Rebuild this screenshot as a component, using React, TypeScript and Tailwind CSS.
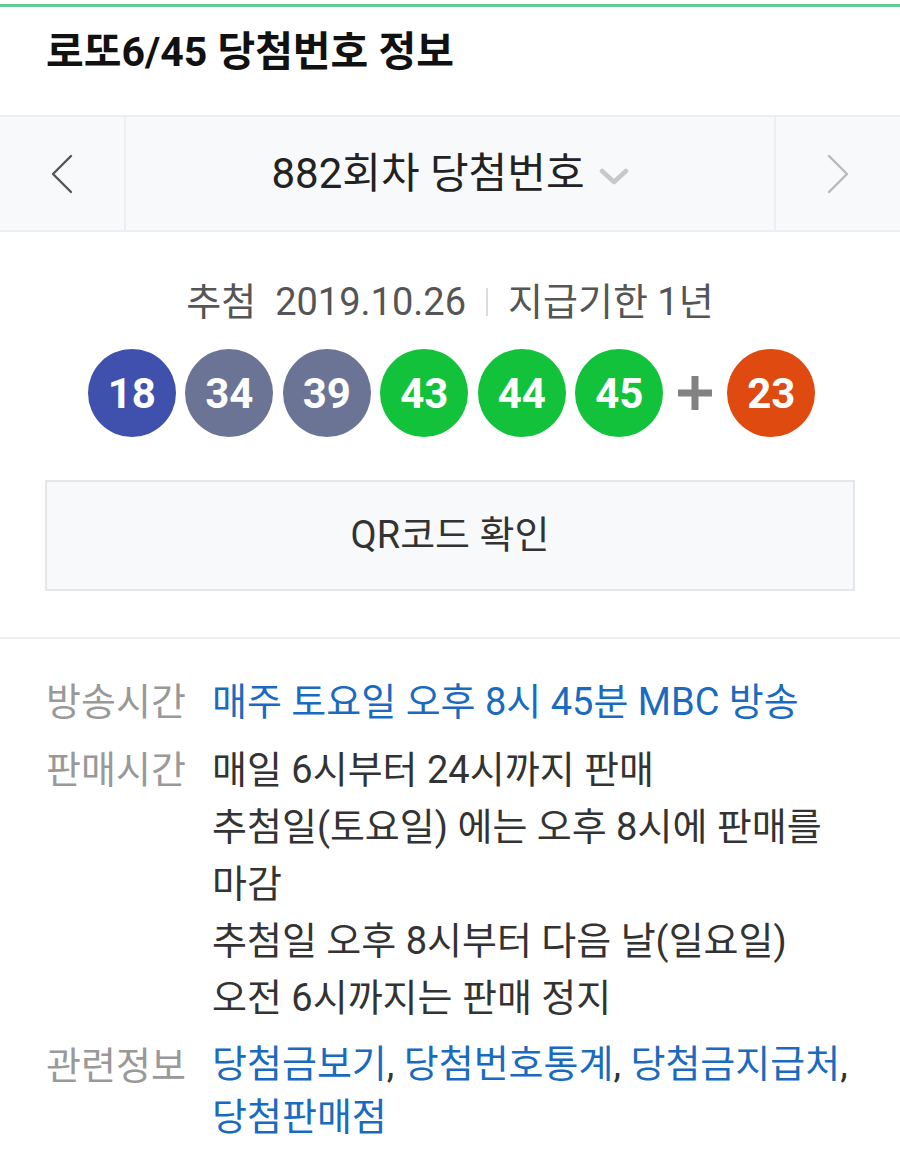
import React from "react";

const font = { fontFamily: 'Roboto, "Noto Sans CJK KR", sans-serif' };

type Ball = { n: number; color: string };

const balls: Ball[] = [
  { n: 18, color: "bg-[#3f51ad]" },
  { n: 34, color: "bg-[#6c7496]" },
  { n: 39, color: "bg-[#6c7496]" },
  { n: 43, color: "bg-[#13c23b]" },
  { n: 44, color: "bg-[#13c23b]" },
  { n: 45, color: "bg-[#13c23b]" },
];

function NumberBall({ n, color }: Ball) {
  return (
    <div
      className={`w-[88px] h-[88px] rounded-full ${color} flex items-center justify-center text-white text-[42px] font-bold`}
    >
      {n}
    </div>
  );
}

export default function App() {
  return (
    <div className="w-[900px] min-h-[1166px] bg-white" style={font}>
      {/* top accent */}
      <div className="pt-[4px]">
        <div className="h-[3px] bg-[#61ca98]" />
      </div>

      {/* title */}
      <div className="h-[108px] pt-[20px] px-[46px]">
        <h1 className="text-[41px] leading-[50px] font-bold text-[#111]">
          로또6/45 당첨번호 정보
        </h1>
      </div>

      {/* round selector */}
      <div className="h-[117px] flex bg-[#f8f9fb] border-t-2 border-b-2 border-[#eceef1]">
        <button className="w-[126px] flex items-center justify-center border-r-2 border-[#eceef1]">
          <svg width="24" height="40" viewBox="0 0 24 40" fill="none">
            <path d="M21 2 L3 20 L21 38" stroke="#555" strokeWidth="2.4" strokeLinecap="round" strokeLinejoin="round" />
          </svg>
        </button>
        <div className="flex-1 flex items-center justify-center gap-[14px]">
          <span className="text-[42px] text-[#222]">882회차 당첨번호</span>
          <svg width="30" height="18" viewBox="0 0 30 18" fill="none" className="mt-[6px]">
            <path d="M3 3 L15 14 L27 3" stroke="#c8c8c8" strokeWidth="4.5" strokeLinecap="round" strokeLinejoin="round" />
          </svg>
        </div>
        <button className="w-[126px] flex items-center justify-center border-l-2 border-[#eceef1]">
          <svg width="24" height="40" viewBox="0 0 24 40" fill="none">
            <path d="M3 2 L21 20 L3 38" stroke="#b9b9b9" strokeWidth="2.4" strokeLinecap="round" strokeLinejoin="round" />
          </svg>
        </button>
      </div>

      {/* winning numbers */}
      <div className="pt-[48px] px-[45px] pb-[46px] border-b-2 border-[#eef0f2]">
        <div className="flex items-center justify-center text-[38px] leading-[44px] text-[#555]">
          <span>추첨&nbsp;&nbsp;2019.10.26</span>
          <span className="w-[2px] h-[28px] bg-[#dcdcdc] mx-[20px]" />
          <span>지급기한 1년</span>
        </div>

        <div className="mt-[25px] flex items-center justify-center gap-[9.5px] pl-[3px]">
          {balls.map((b) => (
            <NumberBall key={b.n} {...b} />
          ))}
          <div className="w-[45px] flex items-center justify-center">
            <svg width="34" height="34" viewBox="0 0 34 34">
              <rect x="0" y="13.5" width="34" height="7" fill="#828282" />
              <rect x="13.5" y="0" width="7" height="34" fill="#828282" />
            </svg>
          </div>
          <NumberBall n={23} color="bg-[#df4a10]" />
        </div>

        <button className="mt-[43px] w-full h-[111px] border-2 border-[#e4e6e9] bg-[#f8f9fb] flex items-center justify-center text-[38px] text-[#333]">
          QR코드 확인
        </button>
      </div>

      {/* info */}
      <div className="pt-[35px] px-[46px] text-[38px] leading-[57px] flex flex-col gap-[11px]">
        <div className="flex">
          <div className="w-[166px] shrink-0 text-[#999]">방송시간</div>
          <div className="text-[#1a6bbf] whitespace-nowrap">매주 토요일 오후 8시 45분 MBC 방송</div>
        </div>
        <div className="flex">
          <div className="w-[166px] shrink-0 text-[#999]">판매시간</div>
          <div className="text-[#333] whitespace-nowrap">
            매일 6시부터 24시까지 판매
            <br />
            추첨일(토요일) 에는 오후 8시에 판매를
            <br />
            마감
            <br />
            추첨일 오후 8시부터 다음 날(일요일)
            <br />
            오전 6시까지는 판매 정지
          </div>
        </div>
        <div className="flex">
          <div className="w-[166px] shrink-0 text-[#999]">관련정보</div>
          <div className="text-[#333] leading-[53px] whitespace-nowrap">
            <a className="text-[#1a6bbf]">당첨금보기</a>,{" "}
            <a className="text-[#1a6bbf]">당첨번호통계</a>,{" "}
            <a className="text-[#1a6bbf]">당첨금지급처</a>,
            <br />
            <a className="text-[#1a6bbf]">당첨판매점</a>
          </div>
        </div>
      </div>
    </div>
  );
}
